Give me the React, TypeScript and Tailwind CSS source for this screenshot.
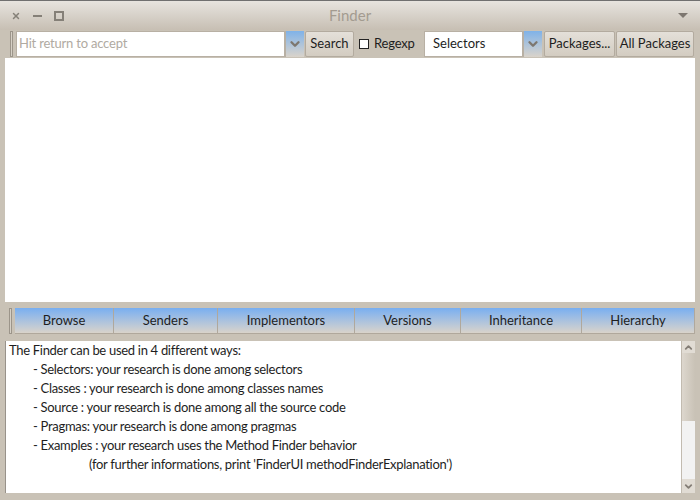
import { ChevronDown, ChevronUp, X } from "lucide-react";

function Arrow() {
  return (
    <div className="w-[19px] h-[26px] flex items-center justify-center bg-gradient-to-b from-[#7fb2e8] to-[#d9d3ca] border-l border-[#b8b0a4]">
      <ChevronDown size={14} strokeWidth={4} className="text-[#7d7770]" />
    </div>
  );
}

function Btn({ label, w }: { label: string; w: string }) {
  return (
    <div
      className={`${w} h-[26px] flex items-center justify-center text-[13px] text-[#1e1e1e] bg-gradient-to-b from-[#e4e0d9] to-[#d3ccc1] border border-[#b3ab9f] rounded-[2px]`}
    >
      {label}
    </div>
  );
}

const tabs = [
  { label: "Browse", w: "w-[99px]" },
  { label: "Senders", w: "w-[104px]" },
  { label: "Implementors", w: "w-[137px]" },
  { label: "Versions", w: "w-[106px]" },
  { label: "Inheritance", w: "w-[121px]" },
  { label: "Hierarchy", w: "flex-1" },
];

const lines = [
  "- Selectors: your research is done among selectors",
  "- Classes : your research is done among classes names",
  "- Source : your research is done among all the source code",
  "- Pragmas: your research is done among pragmas",
  "- Examples : your research uses the Method Finder behavior",
];

export default function App() {
  return (
    <div className="w-[700px] h-[500px] flex flex-col bg-[#c9c2b6] font-['Lato',sans-serif] border-t border-[#707070] overflow-hidden">
      {/* Title bar */}
      <div className="h-[29px] flex items-center px-[10px] bg-gradient-to-b from-[#e7e4df] to-[#c7bfb3]">
        <div className="flex items-center gap-[12px] text-[#858078] w-[60px] pl-[1px]">
          <X size={10} strokeWidth={3.5} />
          <span className="w-[9px] h-[2px] bg-[#858078]" />
          <span className="w-[10px] h-[10px] border-2 border-[#858078]" />
        </div>
        <div className="flex-1 text-center text-[15px] text-[#a39b90]">Finder</div>
        <div className="w-[60px] flex justify-end pr-[2px]">
          <div className="w-0 h-0 border-l-[5px] border-r-[5px] border-t-[5px] border-l-transparent border-r-transparent border-t-[#7d7770]" />
        </div>
      </div>

      {/* Toolbar */}
      <div className="h-[28px] flex items-center pl-[10px] pr-[5px]">
        <div className="w-[3px] h-[26px] border border-[#9c958a] bg-[#d6d0c6] mr-[3px]" />
        <div className="w-[269px] h-[26px] bg-white border border-[#b8b0a4] flex items-center pl-[2px] text-[13px] tracking-[-0.2px] text-[#b0aaa2]">
          Hit return to accept
        </div>
        <Arrow />
        <div className="ml-[1px]">
          <Btn label="Search" w="w-[49px]" />
        </div>
        <div className="flex items-center ml-[5px] w-[61px]">
          <span className="w-[10px] h-[10px] border border-[#222] bg-white" />
          <span className="ml-[5px] text-[13px] tracking-[-0.2px] text-[#1e1e1e]">Regexp</span>
        </div>
        <div className="ml-[4px] w-[99px] h-[26px] bg-white border border-[#b8b0a4] flex items-center pl-[8px] text-[13px] text-[#1e1e1e]">
          Selectors
        </div>
        <Arrow />
        <div className="ml-[2px]">
          <Btn label="Packages..." w="w-[71px]" />
        </div>
        <div className="ml-[1px]">
          <Btn label="All Packages" w="w-[78px]" />
        </div>
      </div>

      {/* Results list */}
      <div className="mx-[5px] h-[244px] bg-white" />

      {/* Action buttons */}
      <div className="h-[36px] flex items-center pl-[9px] pr-[5px] pt-[2px]">
        <div className="w-[3px] h-[26px] border border-[#9c958a] bg-[#d6d0c6] mr-[3px]" />
        {tabs.map((t) => (
          <div
            key={t.label}
            className={`${t.w} h-[26px] flex items-center justify-center text-[13px] text-[#1e1e1e] bg-gradient-to-b from-[#78aef0] to-[#d9d3ca] border-r border-b border-[#b0a89c]`}
          >
            {t.label}
          </div>
        ))}
      </div>

      {/* Description */}
      <div className="mx-[5px] mt-[3px] h-[152px] flex bg-white border-l border-[#98928a]">
        <div className="flex-1 pl-[3px] text-[13px] tracking-[-0.3px] leading-[19px] text-[#1e1e1e]">
          <div>The Finder can be used in 4 different ways:</div>
          {lines.map((l) => (
            <div key={l} className="pl-[24px]">
              {l}
            </div>
          ))}
          <div className="pl-[80px]">(for further informations, print 'FinderUI methodFinderExplanation')</div>
        </div>
        <div className="w-[14px] flex flex-col border-l border-[#c2bbb0]">
          <div className="h-[12px] flex items-center justify-center bg-[#e1dcd4]">
            <ChevronUp size={11} strokeWidth={4} className="text-[#847e76]" />
          </div>
          <div className="h-[68px] bg-gradient-to-r from-[#ddd7ce] to-[#c9c2b6]" />
          <div className="flex-1 bg-[#f2f2f2]" />
          <div className="h-[14px] flex items-center justify-center bg-[#e1dcd4]">
            <ChevronDown size={11} strokeWidth={4} className="text-[#847e76]" />
          </div>
        </div>
      </div>
    </div>
  );
}
